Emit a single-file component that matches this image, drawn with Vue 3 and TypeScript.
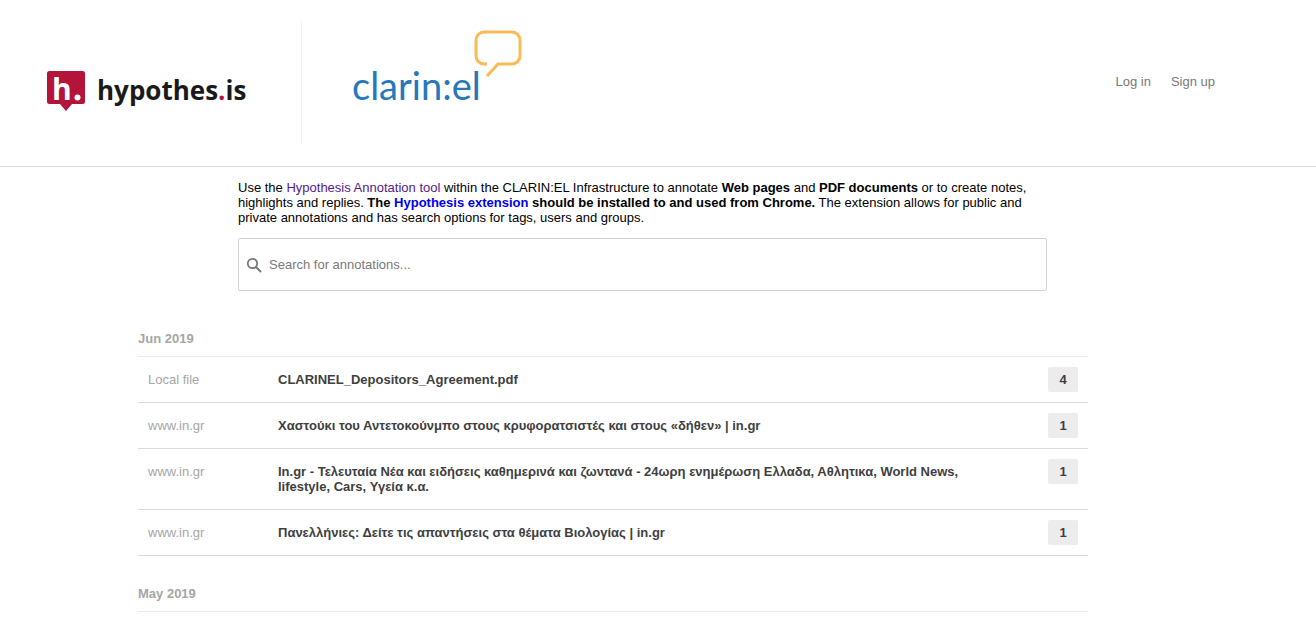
<template>
  <div class="page">
    <header class="top-bar">
      <div class="hyp-logo">
        <svg class="hyp-mark" width="38" height="40" viewBox="0 0 38 40">
          <path d="M2.500 0h33a2.500 2.500 0 0 1 2.500 2.500v28a2.500 2.500 0 0 1-2.500 2.500H25l-6 7-6-7H2.500a2.500 2.500 0 0 1-2.500-2.500v-28a2.500 2.500 0 0 1 2.500-2.500z" fill="#b4133a" />
          <text x="5" y="29" class="hyp-mark-h">h</text>
          <circle cx="30.500" cy="26.500" r="3" fill="#fff" />
        </svg>
        <span class="hyp-name">hypothes<span class="hyp-dot">.</span>is</span>
      </div>
      <div class="logo-divider"></div>
      <div class="clarin-logo">
        <span class="clarin-name">clarin:el</span>
        <svg class="clarin-bubble" width="50" height="49" viewBox="0 0 50 49">
          <path d="M13 46l11-12h14a8 8 0 0 0 8-8V10a8 8 0 0 0-8-8H10a8 8 0 0 0-8 8v16a8 8 0 0 0 8 8h3" fill="none" stroke="#f8bb57" stroke-width="3" />
        </svg>
      </div>
      <nav class="top-nav">
        <a>Log in</a>
        <a>Sign up</a>
      </nav>
    </header>

    <main class="content">
      <section class="intro">
        <p>
          Use the <a class="visited">Hypothesis Annotation tool</a> within the CLARIN:EL Infrastructure to annotate
          <strong>Web pages</strong> and <strong>PDF documents</strong> or to create notes, highlights and replies.
          <strong>The <a class="ext">Hypothesis extension</a> should be installed to and used from Chrome.</strong>
          The extension allows for public and private annotations and has search options for tags, users and groups.
        </p>
        <div class="search-box">
          <svg width="16" height="16" viewBox="0 0 16 16">
            <circle cx="6.500" cy="6.500" r="4.700" fill="none" stroke="#7a7a7a" stroke-width="1.800" />
            <path d="M10 10l4.500 4.500" stroke="#7a7a7a" stroke-width="2" stroke-linecap="round" />
          </svg>
          <input type="text" placeholder="Search for annotations..." />
        </div>
      </section>

      <section v-for="group in groups" :key="group.month" class="month-group">
        <h2 class="month">{{ group.month }}</h2>
        <ul class="rows">
          <li v-for="row in group.rows" :key="row.title" class="row">
            <span class="domain">{{ row.domain }}</span>
            <span class="title">{{ row.title }}</span>
            <span class="count">{{ row.count }}</span>
          </li>
        </ul>
      </section>
    </main>
  </div>
</template>

<script setup lang="ts">
interface Row {
  domain: string
  title: string
  count: number
}

const groups: { month: string; rows: Row[] }[] = [
  {
    month: 'Jun 2019',
    rows: [
      { domain: 'Local file', title: 'CLARINEL_Depositors_Agreement.pdf', count: 4 },
      { domain: 'www.in.gr', title: 'Χαστούκι του Αντετοκούνμπο στους κρυφορατσιστές και στους «δήθεν» | in.gr', count: 1 },
      { domain: 'www.in.gr', title: 'In.gr - Τελευταία Νέα και ειδήσεις καθημερινά και ζωντανά - 24ωρη ενημέρωση Ελλαδα, Αθλητικα, World News, lifestyle, Cars, Υγεία κ.α.', count: 1 },
      { domain: 'www.in.gr', title: 'Πανελλήνιες: Δείτε τις απαντήσεις στα θέματα Βιολογίας | in.gr', count: 1 },
    ],
  },
  { month: 'May 2019', rows: [] },
]
</script>

<style>
html, body { overflow: hidden; background: #fff; }
</style>

<style scoped>
.page { height: 617px; overflow: hidden; font-family: "Liberation Sans", Arial, sans-serif; }

.top-bar { height: 166px; border-bottom: 1px solid #dbdbdb; display: flex; align-items: flex-start; padding-left: 47px; padding-right: 101px; }
.hyp-logo { display: flex; align-items: flex-start; gap: 12px; margin-top: 71px; width: 254px; flex: none; }
.hyp-mark-h { font-family: "Open Sans", sans-serif; font-weight: 700; font-size: 30px; fill: #fff; }
.hyp-name { font-family: "Open Sans", sans-serif; font-weight: 700; font-size: 26px; line-height: 38px; color: #1a1a1a; }
.hyp-dot { color: #b4133a; }
.logo-divider { width: 1px; height: 123px; margin-top: 21px; background: #f3f3ee; flex: none; }
.clarin-logo { position: relative; margin-left: 50px; margin-top: 62px; width: 172px; height: 50px; flex: none; }
.clarin-name { font-family: Lato, sans-serif; font-weight: 400; font-size: 38px; line-height: 46px; color: #2578b9; }
.clarin-bubble { position: absolute; left: 122px; top: -32px; }
.top-nav { margin-left: auto; margin-top: 73px; display: flex; gap: 20px; font-size: 13px; line-height: 17px; color: #7a7a7a; }

.content { width: 950px; margin-left: 138px; }
.intro { width: 809px; margin-left: 100px; padding-top: 13px; }
.intro p { margin: 0; font-size: 13px; line-height: 15px; color: #000; }
.visited { color: #551a8b; }
.ext { color: #0000ee; }
.search-box { height: 53px; box-sizing: border-box; margin-top: 13px; border: 1px solid #d3d3d3; border-radius: 2px; display: flex; align-items: center; gap: 5px; padding-left: 7px; }
.search-box input { flex: 1; border: none; outline: none; font: 13px "Liberation Sans", Arial, sans-serif; color: #333; }
.search-box input::placeholder { color: #7a7a7a; opacity: 1; }

.month-group { margin-top: 40px; }
.month { margin: 0; font-size: 13px; line-height: 15px; font-weight: 700; color: #a6a6a6; padding-bottom: 10px; border-bottom: 1px solid #ececec; }
.month-group + .month-group { margin-top: 30px; }
.rows { list-style: none; margin: 0; padding: 0; }
.row { display: flex; align-items: flex-start; padding: 15px 10px 15px; border-bottom: 1px solid #dbdbdb; }
.domain { width: 130px; flex: none; font-size: 13px; line-height: 15px; color: #a6a6a6; }
.title { flex: 1; padding-right: 80px; font-size: 13px; line-height: 15px; font-weight: 700; color: #3f3f3f; }
.count { width: 30px; height: 25px; margin-top: -5px; margin-bottom: -5px; flex: none; background: #ececec; border-radius: 2px; text-align: center; font-size: 13px; line-height: 25px; font-weight: 700; color: #3f3f3f; }
</style>
